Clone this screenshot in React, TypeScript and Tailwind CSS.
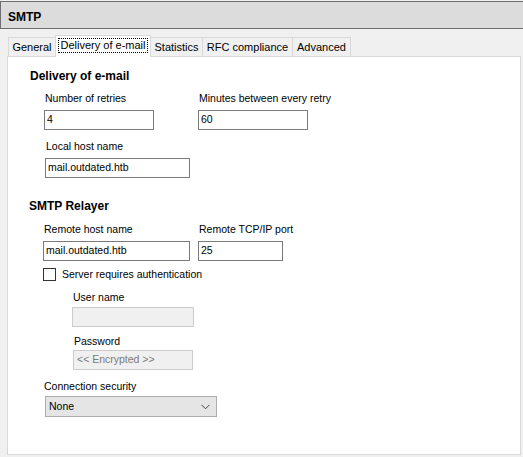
import React from 'react';

const font = "font-['Liberation_Sans',Arial,sans-serif]";

const Label: React.FC<{ children: React.ReactNode; className?: string }> = ({ children, className = '' }) => (
  <div className={`h-[13px] text-[10.5px] leading-[13px] text-black whitespace-nowrap ${className}`}>{children}</div>
);

const TextBox: React.FC<{ value: string; width: string; className?: string }> = ({ value, width, className = '' }) => (
  <div
    className={`h-[20px] ${width} border border-[#7a7a7a] bg-white pl-[2px] flex items-center text-[10.5px] text-black ${className}`}
  >
    {value}
  </div>
);

const DisabledBox: React.FC<{ value?: string; width: string; className?: string }> = ({ value, width, className = '' }) => (
  <div
    className={`h-[20px] ${width} border border-[#cccccc] bg-[#f0f0f0] pl-[3px] flex items-center text-[10.5px] text-[#7a7a7a] ${className}`}
  >
    {value}
  </div>
);

const tabs = [
  { name: 'General', w: 'w-[48px]' },
  { name: 'Delivery of e-mail', w: 'w-[96px]', active: true },
  { name: 'Statistics', w: 'w-[53px]' },
  { name: 'RFC compliance', w: 'w-[91px]' },
  { name: 'Advanced', w: 'w-[59px]' },
];

export default function App() {
  return (
    <div className={`w-[523px] h-[457px] bg-[#f0f0f0] overflow-hidden ${font}`}>
      {/* title bar */}
      <div className="mt-[1px] h-[28px] border-y border-l border-[#6e6e6e] bg-[#dcdcdc] pl-[7px] pt-[3px] flex items-center text-[12px] font-bold text-black">
        SMTP
      </div>

      {/* tab strip */}
      <div className="relative z-10 mt-[6px] -mb-px flex items-end pl-[8px] h-[22px]">
        {tabs.map((t, i) =>
          t.active ? (
            <div
              key={t.name}
              className={`${t.w} h-[22px] -ml-px border-x border-t border-[#d9d9d9] bg-white flex items-start justify-center pt-[2px] text-[11px] text-black`}
            >
              <span className="border border-dotted border-black px-[2px] h-[15px] leading-[13px] whitespace-nowrap">{t.name}</span>
            </div>
          ) : (
            <div
              key={t.name}
              className={`${t.w} h-[19px] mb-px ${i > 0 ? '-ml-px' : ''} border-x border-t border-[#d9d9d9] bg-[#f0f0f0] flex items-center justify-center pt-[1px] text-[11px] text-black whitespace-nowrap`}
            >
              {t.name}
            </div>
          )
        )}
      </div>

      {/* tab page */}
      <div className="ml-[7px] w-[514px] h-[399px] bg-white border border-[#d9d9d9] flex flex-col">
        <div className="mt-[12px] ml-[22px] h-[14px] leading-[14px] text-[12px] font-bold text-black">Delivery of e-mail</div>

        <div className="mt-[9px] ml-[36px] flex gap-[44px]">
          <div className="flex flex-col">
            <Label className="pl-[1px]">Number of retries</Label>
            <TextBox value="4" width="w-[110px]" className="mt-[5px]" />
          </div>
          <div className="flex flex-col">
            <Label className="pl-[1px]">Minutes between every retry</Label>
            <TextBox value="60" width="w-[110px]" className="mt-[5px]" />
          </div>
        </div>

        <div className="mt-[10px] ml-[37px] flex flex-col">
          <Label className="pl-[1px]">Local host name</Label>
          <TextBox value="mail.outdated.htb" width="w-[145px]" className="mt-[5px]" />
        </div>

        <div className="mt-[21px] ml-[21px] h-[14px] leading-[14px] text-[12px] font-bold text-black">SMTP Relayer</div>

        <div className="mt-[10px] ml-[35px] flex gap-[8px]">
          <div className="flex flex-col">
            <Label className="pl-[1px]">Remote host name</Label>
            <TextBox value="mail.outdated.htb" width="w-[147px]" className="mt-[5px]" />
          </div>
          <div className="flex flex-col">
            <Label className="pl-[1px]">Remote TCP/IP port</Label>
            <TextBox value="25" width="w-[85px]" className="mt-[5px]" />
          </div>
        </div>

        <div className="mt-[7px] ml-[35px] flex items-center gap-[6px]">
          <div className="w-[13px] h-[13px] border border-[#333333] bg-white" />
          <Label>Server requires authentication</Label>
        </div>

        <div className="mt-[10px] ml-[64px] flex flex-col">
          <Label className="pl-[1px]">User name</Label>
          <DisabledBox width="w-[122px]" className="mt-[3px]" />
        </div>

        <div className="mt-[8px] ml-[65px] flex flex-col">
          <Label className="pl-[1px]">Password</Label>
          <DisabledBox value="<< Encrypted >>" width="w-[120px]" className="mt-[2px]" />
        </div>

        <div className="mt-[10px] ml-[37px] flex flex-col">
          <Label className="-ml-px">Connection security</Label>
          <div className="mt-[3px] h-[21px] w-[172px] border border-[#adadad] bg-[#e5e5e5] pl-[3px] pr-[6px] flex items-center justify-between text-[10.5px] text-black">
            <span>None</span>
            <svg width="9" height="6" viewBox="0 0 9 6" fill="none">
              <path d="M0.5 0.8 L4.5 4.8 L8.5 0.8" stroke="#444444" strokeWidth="1" />
            </svg>
          </div>
        </div>
      </div>
    </div>
  );
}
